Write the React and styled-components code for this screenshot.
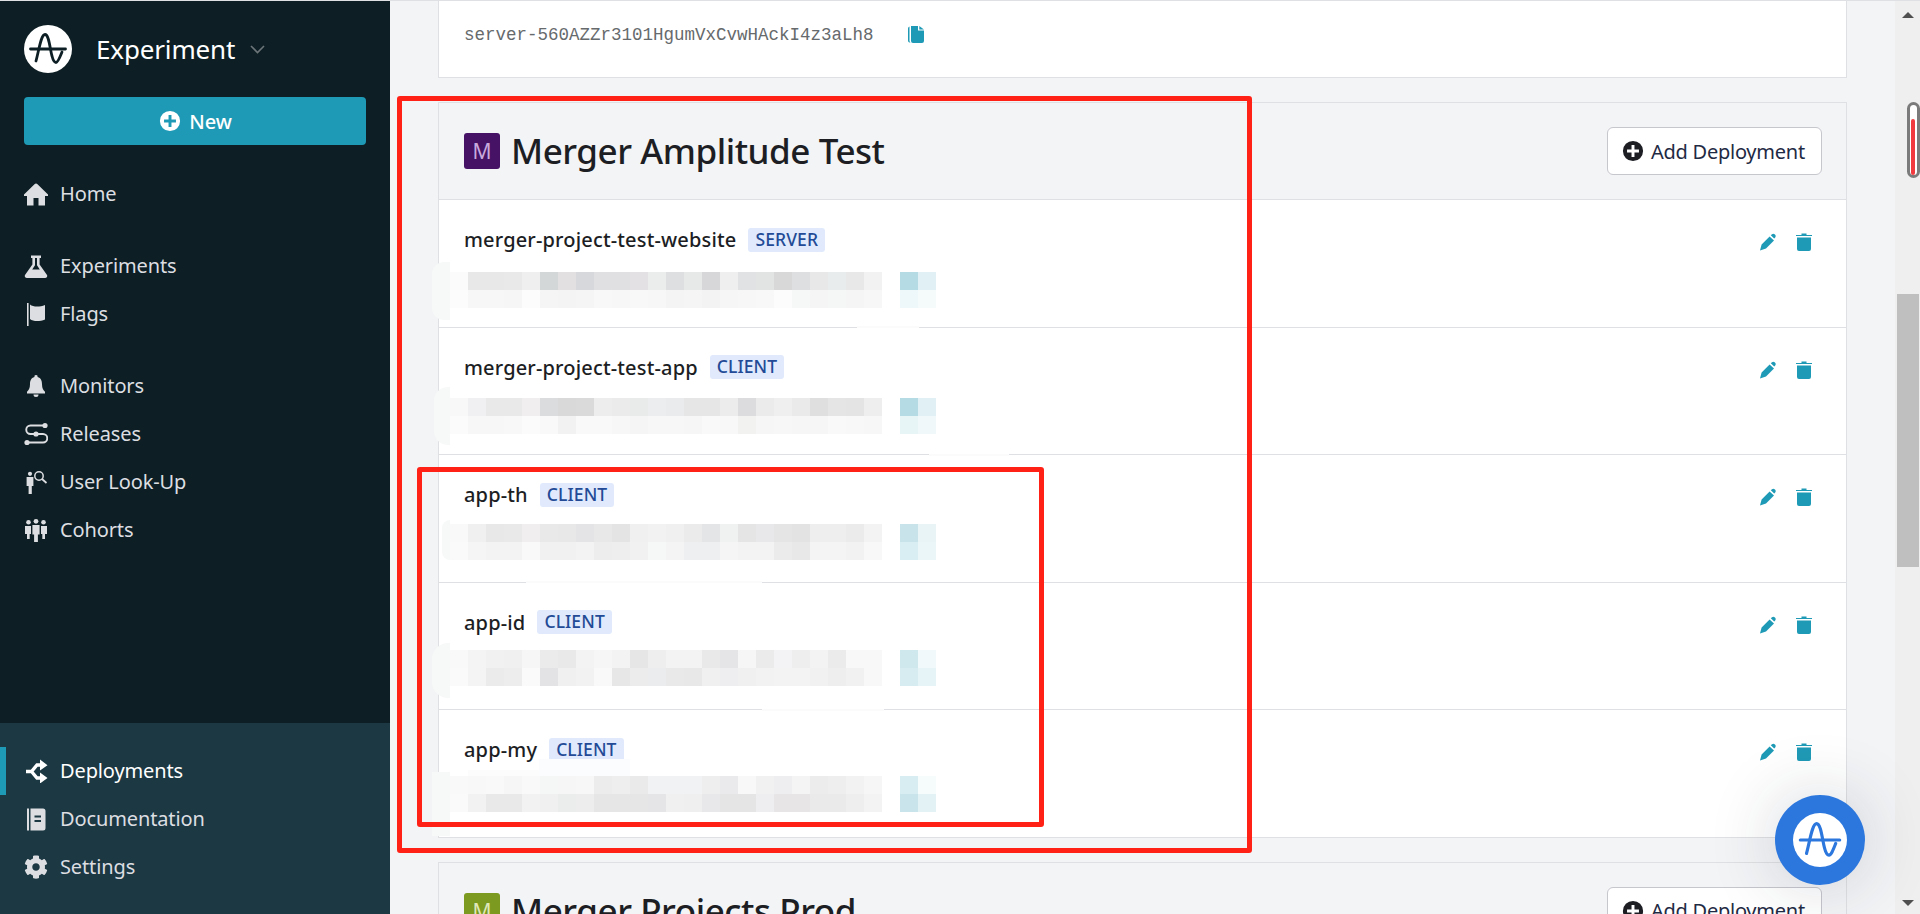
import React from "react";
import styled, { createGlobalStyle } from "styled-components";
import { FaCog } from "react-icons/fa";

const Global = createGlobalStyle`
  html, body { margin: 0; padding: 0; height: 100%; overflow: hidden; background: #f3f4f6; }
  * { box-sizing: border-box; }
  body { font-family: "Noto Sans", "Liberation Sans", sans-serif; }
`;

const Page = styled.div`
  position: relative;
  display: flex;
  width: 1920px;
  height: 914px;
  overflow: hidden;
  border-top: 1px solid #dfe0e3;
`;

const Sidebar = styled.aside`
  width: 390px;
  flex: none;
  display: flex;
  flex-direction: column;
  background: #0d1f24;
`;

const SideTop = styled.div`
  flex: 1;
  padding: 24px 24px 0 0;
`;

const Brand = styled.div`
  display: flex;
  align-items: center;
  height: 48px;
  padding-left: 24px;
  color: #fff;
  font-size: 26px;
  letter-spacing: -0.15px;
`;

const BrandName = styled.span`
  margin-left: 24px;
`;

const Chevron = styled.svg`
  width: 15px;
  height: 9px;
  margin-left: 15px;
  fill: none;
  stroke: #6c7579;
  stroke-width: 1.6;
`;

const LogoDisc = styled.div`
  width: ${(p) => p.$size}px;
  height: ${(p) => p.$size}px;
  border-radius: 50%;
  background: #fff;
  flex: none;
  display: flex;
`;

const NewButton = styled.button`
  display: flex;
  align-items: center;
  justify-content: center;
  gap: 8px;
  width: 342px;
  height: 48px;
  margin: 24px 0 25px 24px;
  padding: 0 0 0 1px;
  border: 0;
  border-radius: 4px;
  background: #1f9ab6;
  color: #fff;
  font: 500 20px "Noto Sans", sans-serif;
`;

const NavGroup = styled.nav`
  display: flex;
  flex-direction: column;
  margin-bottom: 24px;
`;

const NavRow = styled.div`
  position: relative;
  display: flex;
  align-items: center;
  height: 48px;
  padding-left: 24px;
  gap: 12px;
  font-size: 20px;
  letter-spacing: -0.12px;
  color: ${(p) => (p.$active ? "#ffffff" : "#dcdee2")};
`;

const NavLabel = styled.span`
  padding-bottom: 2px;
`;

const ActiveBar = styled.span`
  position: absolute;
  left: 0;
  top: 0;
  width: 6px;
  height: 48px;
  background: #1f9ab6;
`;

const NavIcon = styled.svg`
  width: 24px;
  height: 24px;
  flex: none;
  fill: currentColor;
`;

const GearSlot = styled.span`
  display: flex;
  width: 24px;
  height: 24px;
  flex: none;
  font-size: 24px;
`;

const SideBottom = styled.div`
  height: 191px;
  flex: none;
  padding-top: 24px;
  background: #1c3842;
`;

const Main = styled.main`
  flex: 1;
  min-width: 0;
  display: flex;
  flex-direction: column;
  gap: 24px;
  padding: 0 48px;
  overflow: hidden;
  background: #f3f4f6;
`;

const KeyCard = styled.section`
  flex: none;
  height: 77px;
  display: flex;
  align-items: flex-start;
  padding: 19px 0 0 25px;
  gap: 34px;
  background: #fff;
  border: 1px solid #dfe0e3;
  border-top: 0;
`;

const KeyText = styled.span`
  font: 17.5px/30px "Liberation Mono", monospace;
  color: #666a6c;
`;

const CopyIcon = styled.svg`
  width: 16px;
  height: 17px;
  margin-top: 6px;
  fill: #1f9ab6;
`;

const ProjectCard = styled.section`
  flex: none;
  border: 1px solid #dfe0e3;
  border-bottom: 0;
`;

const ProjectHeader = styled.header`
  display: flex;
  align-items: center;
  justify-content: space-between;
  height: 97px;
  padding: 0 24px 0 25px;
  background: #f3f4f6;
  border-bottom: 1px solid #dfe0e3;
`;

const ProjectTitle = styled.div`
  display: flex;
  align-items: center;
  gap: 11px;
`;

const Avatar = styled.span`
  display: flex;
  align-items: center;
  justify-content: center;
  width: 36px;
  height: 36px;
  border-radius: 3px;
  background: ${(p) => p.$bg};
  color: ${(p) => p.$fg};
  font-size: 21px;
`;

const TitleText = styled.h2`
  margin: 0;
  font-size: 35px;
  font-weight: 500;
  line-height: 44px;
  letter-spacing: -0.45px;
  color: #1c1e24;
`;

const AddButton = styled.button`
  display: flex;
  align-items: center;
  gap: 7px;
  width: 215px;
  height: 48px;
  padding: 0 14px;
  background: #fff;
  border: 1px solid #c6c6cd;
  border-radius: 6px;
  color: #1f2a44;
  font: 20px "Noto Sans", sans-serif;
  letter-spacing: -0.25px;
  white-space: nowrap;
`;

const PlusIcon = styled.svg`
  width: ${(p) => p.$size}px;
  height: ${(p) => p.$size}px;
  flex: none;
  fill: ${(p) => p.$color};
`;

const RowList = styled.div`
  background: #fff;
`;

const Row = styled.div`
  position: relative;
  display: flex;
  justify-content: space-between;
  height: 127.6px;
  padding: 27.6px 34px 0 25px;
  border-bottom: 1px solid #dfe0e3;
`;

const NameLine = styled.div`
  display: flex;
  align-items: center;
  gap: 12px;
  height: 24px;
`;

const Name = styled.span`
  font-size: 20px;
  font-weight: 500;
  letter-spacing: 0.16px;
  color: #1c1e24;
`;

const Badge = styled.span`
  display: flex;
  align-items: center;
  height: 24px;
  padding: 0 7px 2px;
  border-radius: 3px;
  background: #e0eafc;
  color: #234a96;
  font-size: 17.5px;
  font-weight: 500;
  letter-spacing: 0.1px;
`;

const Actions = styled.div`
  display: flex;
  align-items: center;
  gap: 20px;
  height: 18px;
  margin-top: 5.4px;
`;

const ActionIcon = styled.svg`
  width: 16px;
  height: 18px;
  fill: #1f9ab6;
`;

const Mosaic = styled.div`
  position: absolute;
  left: 11px;
  top: ${(p) => p.$top}px;
  display: flex;
  gap: 18px;
`;

const CellGrid = styled.div`
  display: grid;
  grid-template-columns: repeat(${(p) => p.$cols}, 18px);
  grid-auto-rows: 18px;
`;

const Cell = styled.i`
  display: block;
  background: ${(p) => p.$c};
`;

const Smudge = styled.span`
  position: absolute;
  left: ${(p) => p.$x}px;
  top: ${(p) => p.$y}px;
  width: ${(p) => p.$w}px;
  height: ${(p) => p.$h}px;
  background: ${(p) => p.$bg || "#f7f9f8"};
  border-radius: ${(p) => p.$r || "0"};
`;

const Track = styled.div`
  position: relative;
  width: 25px;
  flex: none;
  display: flex;
  flex-direction: column;
  align-items: center;
  background: #efefef;
`;

const ArrowUp = styled.span`
  margin-top: 11px;
  border-left: 6px solid transparent;
  border-right: 6px solid transparent;
  border-bottom: 6px solid #505050;
`;

const ArrowDown = styled.span`
  margin-top: auto;
  margin-bottom: 8px;
  border-left: 6px solid transparent;
  border-right: 6px solid transparent;
  border-top: 6px solid #505050;
`;

const Thumb = styled.div`
  width: 22px;
  height: 273px;
  margin-top: 276px;
  background: #bfbfbf;
`;

const Gauge = styled.div`
  position: absolute;
  left: 12px;
  top: 101px;
  width: 12.5px;
  height: 76px;
  padding: 14px 0 0 1px;
  background: #fff;
  border: 3px solid #7b7b7b;
  border-radius: 7px;
  &::after {
    content: "";
    display: block;
    width: 4px;
    height: 100%;
    background: #f03a3f;
    border-radius: 2px;
  }
`;

const FloatButton = styled.div`
  position: absolute;
  left: 1775px;
  top: 794px;
  width: 90px;
  height: 90px;
  display: flex;
  align-items: center;
  justify-content: center;
  border-radius: 50%;
  background: #2b77de;
  box-shadow: 0 0 70px rgba(30, 40, 60, 0.2);
`;

const RedBox = styled.div`
  position: absolute;
  left: ${(p) => p.$x}px;
  top: ${(p) => p.$y}px;
  width: ${(p) => p.$w}px;
  height: ${(p) => p.$h}px;
  border: 5px solid #ff2116;
  border-radius: 3px;
  pointer-events: none;
`;

const Logo = ({ color }) => (
  <svg viewBox="0 0 48 48" width="100%" height="100%" fill="none" stroke={color} strokeWidth="2.8" strokeLinecap="round">
    <path d="M6.5 24H41.5" />
    <path d="M12 36C15 25 17 9.5 21 9.5C25 9.5 26 24 28 31C29 35 30.5 37.5 32 37.5C34 37.5 36 32 38 27" />
  </svg>
);

const PlusPath = "M12 1a11 11 0 1 0 0 22 11 11 0 0 0 0-22zM10.4 5.5h3.2v4.9h4.9v3.2h-4.9v4.9h-3.2v-4.9H5.5v-3.2h4.9z";

const icons = {
  home: <path d="M12 1.5c.6 0 1 .3 1.5.7L24 12.5V14H21V23.5H14.5V16H9.5V23.5H3V14H0V12.5L10.5 2.2c.5-.4.9-.7 1.5-.7z" />,
  flask: <path fillRule="evenodd" d="M7 1.5h10v2.5h-1.4v6.5L23 21c.8 1.5-.2 3-2 3H3c-1.8 0-2.8-1.5-2-3l7.4-10.5V4H7zM11 4v7.3L8.2 15.5h7.6L13 11.3V4z" />,
  flag: <path d="M3 1h1.6v23.5H3zM6 2.5c3 2.6 9.5 2.8 15 .5v14.5c-5.5 2.3-12 2.1-15-.5z" />,
  bell: <path d="M12 1a1.6 1.6 0 0 1 1.6 1.9C17 3.8 18 6.8 18 10.2c0 4 1.4 6 3 7.6V19.4H3v-1.6c1.6-1.6 3-3.6 3-7.6 0-3.4 1-6.4 4.4-7.3A1.6 1.6 0 0 1 12 1zM9.5 20.6h5a2.5 2.5 0 0 1-5 0z" />,
  releases: (
    <>
      <path d="M21 3.5H6.5a4.2 4.2 0 0 0 0 8.5H19a4.2 4.2 0 0 1 0 8.5H3" fill="none" stroke="currentColor" strokeWidth="1.9" />
      <circle cx="21" cy="3.5" r="2.6" />
      <circle cx="12" cy="12" r="2.6" />
      <circle cx="3" cy="20.5" r="2.6" />
    </>
  ),
  lookup: (
    <>
      <circle cx="6" cy="3.8" r="2.1" />
      <path d="M2.6 7h6.8v9H7.8v8H4.6v-8H2.6z" />
      <circle cx="15" cy="6" r="4.2" fill="none" stroke="currentColor" strokeWidth="1.5" />
      <path d="M18 9l4.5 4" fill="none" stroke="currentColor" strokeWidth="1.7" />
    </>
  ),
  cohorts: (
    <>
      <circle cx="4.5" cy="4.3" r="2.3" />
      <circle cx="12" cy="3.3" r="2.4" />
      <circle cx="19.5" cy="4.3" r="2.3" />
      <path d="M1 8h6v8H5.7v5H3v-5H1zM8.4 7h7.2v9.5h-1.7V24h-3.8v-7.5H8.4zM17 8h6v8h-2v5h-2.7v-5H17z" />
    </>
  ),
  deploy: (
    <>
      <path d="M2 12.5h5.5L13 6h4M7.5 12.5L13 19h4" fill="none" stroke="currentColor" strokeWidth="3.4" />
      <path d="M16 .5l7.5 5.700L16 11.5zM16 13.5l7.5 5.5L16 24.5z" />
    </>
  ),
  docs: <path fillRule="evenodd" d="M3 1.5h2v22H3zM6.5 1.5H19a2.5 2.5 0 0 1 2.5 2.5v17a2.5 2.5 0 0 1-2.5 2.5H6.5zM10.5 8.5v2H17v-2zM10.5 13v2H17v-2z" />,
};

const Icon = ({ name }) => <NavIcon viewBox="0 0 24 24">{icons[name]}</NavIcon>;

const Nav = ({ icon, label, active, children }) => (
  <NavRow $active={active}>
    {active && <ActiveBar />}
    {children || <Icon name={icon} />}
    <NavLabel>{label}</NavLabel>
  </NavRow>
);

const teal = [
  ["b5dce5", "e0f0f4", "eef7f9", "f5fafb"],
  ["b5dce5", "e0f0f4", "e8f5f6", "f0f8f9"],
  ["c8e4ea", "e9f4f6", "d9eef2", "ebf6f8"],
  ["cfe8ee", "f1f9fa", "d6ecf1", "e6f4f7"],
  ["d8edf2", "f6fbfc", "c9e5eb", "e3f2f5"],
];

const cells = [
  "fbfbfb e8e8e9 e8e8e8 e9e9e9 efefef d3d7d8 e2e0e0 d7d8dc e0e0e2 e0e0e2 e3e1e3 ebeded dedfe1 e7e9e8 d7d7d9 efefef e1e2e4 e2e3e3 d9d8d8 dedfe1 e8e8e8 e9ecec e9e8e9 f2f2f3 fcfcfc f7f7f7 f7f7f7 f6f6f6 fcfcfc f5f5f5 f4f4f4 f5f5f5 f8f8f8 f7f7f7 f8f8f8 f7f7f7 f4f4f4 f5f5f5 f3f3f3 f6f6f6 f7f7f7 f8f8f8 fcfcfc f6f7f7 f5f5f5 f5f6f6 f5f5f5 f7f7f7",
  "f8f8f8 f0f0f2 e9e9e9 e9e9e9 f0eeef dadcde d9d9d9 dadada ededed ebebeb e9ebeb ecedee e9ebed e6e6e7 e6e6e6 ececec dcdcde ebebeb efefef eaeaea dfdfdf e5e5e6 e4e4e4 eeeeee fbfbfb f7f7f7 f7f7f7 f8f8f8 fbfbfb f9f9f9 f2f2f2 f9f9f9 f9f9f9 f7f7f7 f5f5f5 f7f7f7 f7f7f7 f6f6f6 f9f9f9 f8f8f8 f2f2f0 f6f6f6 f7f7f7 f6f6f6 f6f6f6 f9f9f9 f8f8f8 f7f7f7",
  "f9f9f9 f0f0f0 e8e8e8 e9e9e9 f0eeee e9e9e9 e8e8e8 e4e4e6 e8e8e8 e4e4e4 f0f0f0 f2f2f2 f0f0f0 ebebeb e4e5e6 f0f1f1 e5e5e5 e8e8ea e5e5e5 e3e3e4 eeeeee eeeeee ebebeb f3f3f3 fafafa f5f5f5 f2f3f2 f2f3f2 f9f9f9 f1f1f1 f1f1f1 f3f3f3 ededed eeeeee f1f1f1 f6f7f7 f4f4f4 eeeff0 eeeff0 f5f5f5 f3f3f3 f3f3f3 ebebeb e8e8e8 f4f4f4 f4f4f4 f2f2f2 f8f8f8",
  "f9f9f9 f4f4f4 f1f1f1 f0f0f0 f6f6f6 ebebeb e9e9e9 f3f3f3 f6f6f6 f3f3f3 e6e6e6 eeeeee f3f3f3 f3f3f3 e9e9e9 e5e5e7 f6f6f6 ebebeb f3f3f5 eeeeee f3f3f3 ebebeb f8f8f8 f8f8f8 fafafa f4f4f4 ebebeb ededed fafafa e3e3e5 f0f0f0 f2f2f2 f9f9f9 e7e7e8 ececec ebeced e9e9e9 e8e8e8 f0f0f0 eeeef0 f0f0f0 f2f2f2 f3f3f3 f3f3f3 f1f1f1 eeeeee f1f1f1 f8f8f8",
  "f9f9f9 f8f8f8 f9f9f9 f6f6f6 f9f9f9 f5f6f6 f6f6f6 f7f7f7 ececec eeeeee eaeaea f1f2f3 f1f2f3 f1f2f3 eeeeee eaeaec f8f8f8 f1f1f2 eeeef0 f4f4f4 ececec eeeeee f2f2f2 f6f6f6 fafafa f2f2f3 e9e9e9 e9e9e9 f2f2f2 f0f0f0 ebecec ededed e7e6e7 e7e6e7 e6e6e7 e5e5e7 f0f0f0 efefef e8e8ea e5e5e5 e5e5e5 eeeef0 e7e5e6 e7e5e6 eaeaea eaeaea eeeeee f3f3f3",
];

const rows = [
  {
    name: "merger-project-test-website", kind: "SERVER", top: 72,
    smudges: [
      { $x: -7, $y: 62, $w: 18, $h: 58, $r: "12px 0 0 12px" },
      { $x: 418, $y: 126, $w: 62, $h: 2, $bg: "#fbfbfb" },
    ],
  },
  {
    name: "merger-project-test-app", kind: "CLIENT", top: 70.4,
    smudges: [
      { $x: -5, $y: 59, $w: 16, $h: 58, $r: "14px 0 0 14px" },
      { $x: 490, $y: 126, $w: 80, $h: 2, $bg: "#fbfbfb" },
    ],
  },
  {
    name: "app-th", kind: "CLIENT", top: 68.8,
    smudges: [
      { $x: 3, $y: 65, $w: 8, $h: 40, $r: "8px 0 0 8px" },
      { $x: 87, $y: 126, $w: 236, $h: 2, $bg: "#fbfbfb" },
    ],
  },
  {
    name: "app-id", kind: "CLIENT", top: 67.2,
    smudges: [
      { $x: -7, $y: 60, $w: 18, $h: 55, $r: "16px 0 0 16px" },
      { $x: 323, $y: 126, $w: 122, $h: 2, $bg: "#fbfbfb" },
    ],
  },
  {
    name: "app-my", kind: "CLIENT", top: 65.6,
    smudges: [
      { $x: -7, $y: 62, $w: 18, $h: 64 },
      { $x: 100, $y: 48.6, $w: 91, $h: 17, $bg: "#fbfcfe" },
      { $x: 29, $y: 60, $w: 71, $h: 5.6, $bg: "#fcfcfc" },
    ],
  },
];

const DeploymentRow = ({ row, index }) => (
  <Row>
    {row.smudges.map((s, i) => <Smudge key={i} {...s} />)}
    <NameLine>
      <Name>{row.name}</Name>
      <Badge>{row.kind}</Badge>
    </NameLine>
    <Actions>
      <ActionIcon viewBox="0 0 16 18">
        <path d="M0 17.5L1.6 11.5 9.6 3.5 14 7.5 6 15.5zM10.8 2.3L12 1.2c.8-.7 1.9-.7 2.6 0l.6.6c.7.8.7 1.9 0 2.6l-1 1z" />
      </ActionIcon>
      <ActionIcon viewBox="0 0 16 18">
        <path d="M0 2h5.5V.6h5V2H16v1H0zM1 4.5h14V16a2 2 0 0 1-2 2H3a2 2 0 0 1-2-2z" />
      </ActionIcon>
    </Actions>
    <Mosaic $top={row.top}>
      <CellGrid $cols={24}>
        {cells[index].split(" ").map((c, i) => <Cell key={i} $c={`#${c}`} />)}
      </CellGrid>
      <CellGrid $cols={2}>
        {teal[index].map((c, i) => <Cell key={i} $c={`#${c}`} />)}
      </CellGrid>
    </Mosaic>
  </Row>
);

const AddDeployment = () => (
  <AddButton>
    <PlusIcon $size={22} $color="#1c1e24" viewBox="0 0 24 24"><path fillRule="evenodd" d={PlusPath} /></PlusIcon>
    Add Deployment
  </AddButton>
);

export default function App() {
  return (
    <Page>
      <Global />
      <Sidebar>
        <SideTop>
          <Brand>
            <LogoDisc $size={48}><Logo color="#0d1f24" /></LogoDisc>
            <BrandName>Experiment</BrandName>
            <Chevron viewBox="0 0 15 9"><path d="M1 1l6.5 6.5L14 1" /></Chevron>
          </Brand>
          <NewButton>
            <PlusIcon $size={22} $color="#fff" viewBox="0 0 24 24"><path fillRule="evenodd" d={PlusPath} /></PlusIcon>
            New
          </NewButton>
          <NavGroup><Nav icon="home" label="Home" /></NavGroup>
          <NavGroup>
            <Nav icon="flask" label="Experiments" />
            <Nav icon="flag" label="Flags" />
          </NavGroup>
          <NavGroup>
            <Nav icon="bell" label="Monitors" />
            <Nav icon="releases" label="Releases" />
            <Nav icon="lookup" label="User Look-Up" />
            <Nav icon="cohorts" label="Cohorts" />
          </NavGroup>
        </SideTop>
        <SideBottom>
          <Nav icon="deploy" label="Deployments" active />
          <Nav icon="docs" label="Documentation" />
          <Nav label="Settings"><GearSlot><FaCog /></GearSlot></Nav>
        </SideBottom>
      </Sidebar>
      <Main>
        <KeyCard>
          <KeyText>server-560AZZr3101HgumVxCvwHAckI4z3aLh8</KeyText>
          <CopyIcon viewBox="0 0 16 17">
            <path d="M0 2.5A2 2 0 0 1 1.5.6V15a2 2 0 0 0 1 1.4A2 2 0 0 1 0 14.5zM3 0h7v4.5h6V15a2 2 0 0 1-2 2H5a2 2 0 0 1-2-2zM11.3 0L16 3.4h-4.700z" />
          </CopyIcon>
        </KeyCard>
        <ProjectCard>
          <ProjectHeader>
            <ProjectTitle>
              <Avatar $bg="#451266" $fg="#c9a9dd">M</Avatar>
              <TitleText>Merger Amplitude Test</TitleText>
            </ProjectTitle>
            <AddDeployment />
          </ProjectHeader>
          <RowList>
            {rows.map((r, i) => <DeploymentRow key={r.name} row={r} index={i} />)}
          </RowList>
        </ProjectCard>
        <ProjectCard>
          <ProjectHeader>
            <ProjectTitle>
              <Avatar $bg="#7c9a1f" $fg="#dfe8b8">M</Avatar>
              <TitleText>Merger Projects Prod</TitleText>
            </ProjectTitle>
            <AddDeployment />
          </ProjectHeader>
        </ProjectCard>
      </Main>
      <Track>
        <ArrowUp />
        <Thumb />
        <ArrowDown />
        <Gauge />
      </Track>
      <RedBox $x={397} $y={95} $w={855} $h={757} />
      <RedBox $x={417} $y={466} $w={627} $h={360} />
      <FloatButton><LogoDisc $size={54}><Logo color="#2b77de" /></LogoDisc></FloatButton>
    </Page>
  );
}
